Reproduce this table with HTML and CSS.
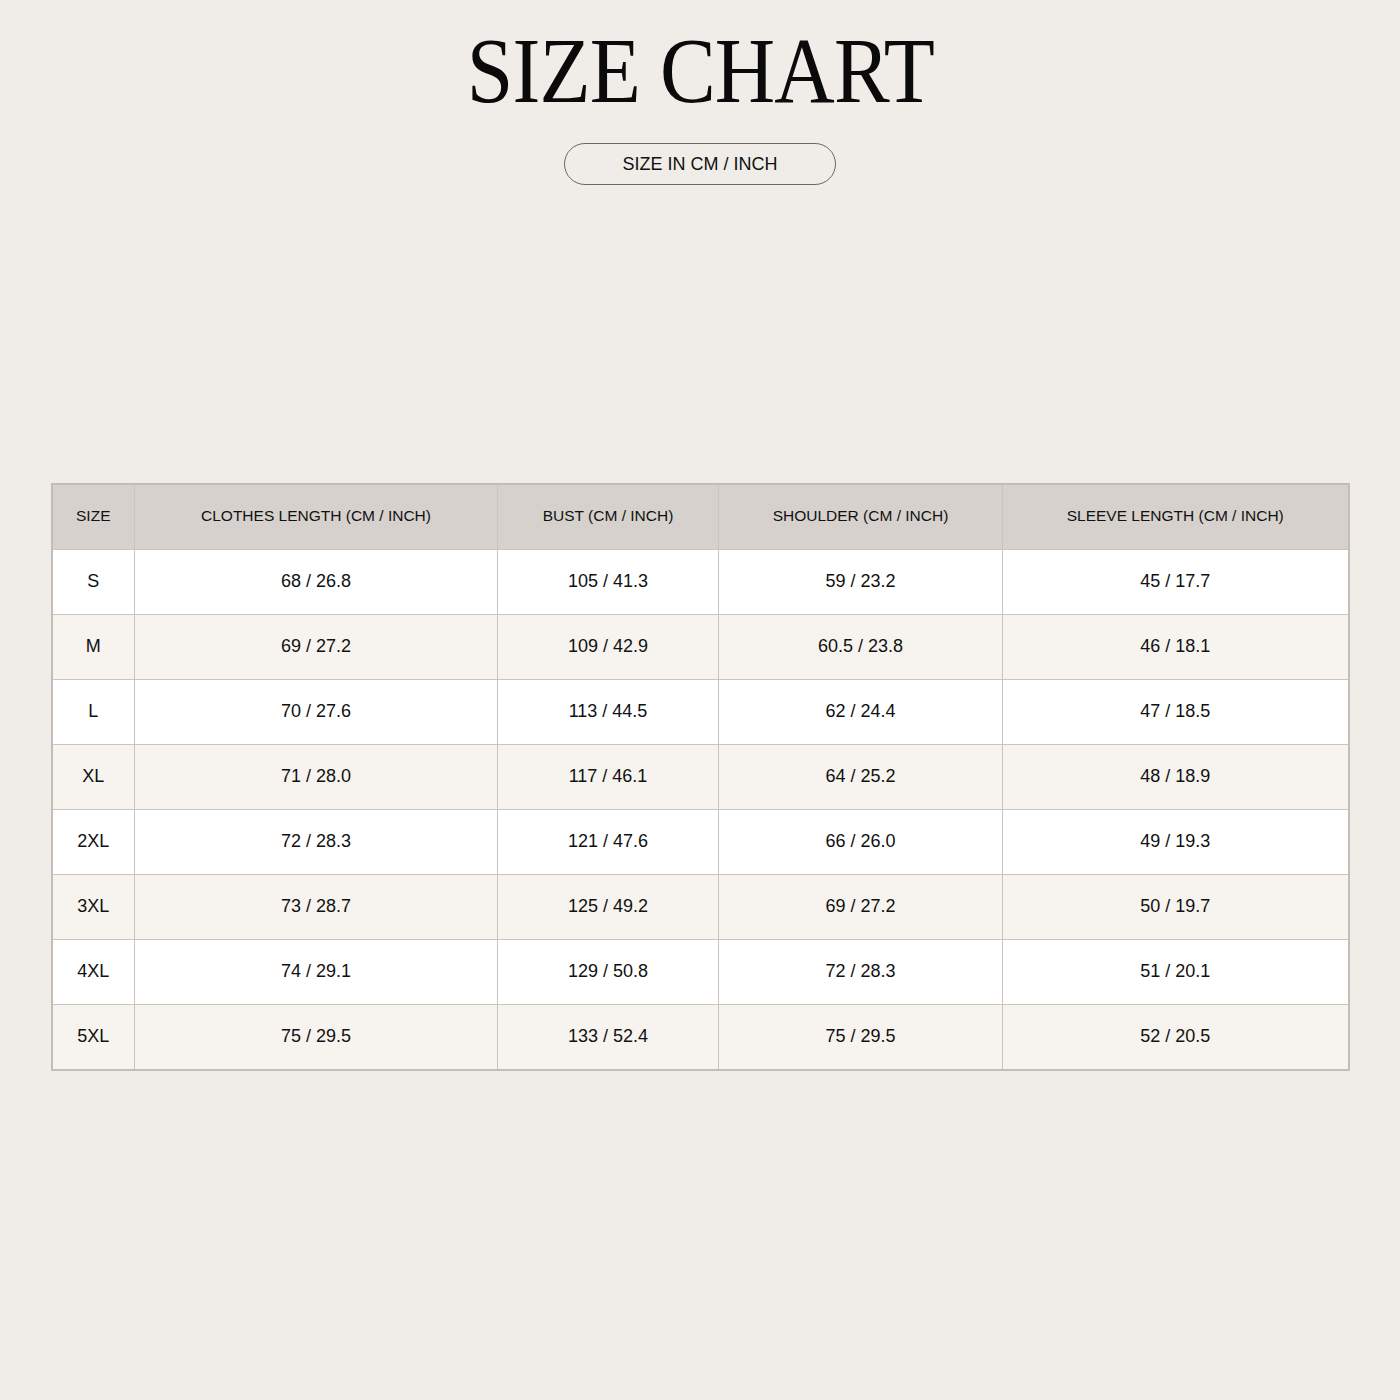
FILE: index.html
```html
<!DOCTYPE html>
<html>
<head>
<meta charset="utf-8">
<link rel="stylesheet" href="styles.css">
</head>
<body>
<div class="page">
  <h1 class="title">SIZE CHART</h1>
  <div class="pill">SIZE IN CM / INCH</div>
  <table class="chart">
    <colgroup>
      <col class="c1"><col class="c2"><col class="c3"><col class="c4"><col class="c5">
    </colgroup>
    <thead>
      <tr><th>SIZE</th><th>CLOTHES LENGTH (CM / INCH)</th><th>BUST (CM / INCH)</th><th>SHOULDER (CM / INCH)</th><th>SLEEVE LENGTH (CM / INCH)</th></tr>
    </thead>
    <tbody>
      <tr><td>S</td><td>68 / 26.8</td><td>105 / 41.3</td><td>59 / 23.2</td><td>45 / 17.7</td></tr>
      <tr><td>M</td><td>69 / 27.2</td><td>109 / 42.9</td><td>60.5 / 23.8</td><td>46 / 18.1</td></tr>
      <tr><td>L</td><td>70 / 27.6</td><td>113 / 44.5</td><td>62 / 24.4</td><td>47 / 18.5</td></tr>
      <tr><td>XL</td><td>71 / 28.0</td><td>117 / 46.1</td><td>64 / 25.2</td><td>48 / 18.9</td></tr>
      <tr><td>2XL</td><td>72 / 28.3</td><td>121 / 47.6</td><td>66 / 26.0</td><td>49 / 19.3</td></tr>
      <tr><td>3XL</td><td>73 / 28.7</td><td>125 / 49.2</td><td>69 / 27.2</td><td>50 / 19.7</td></tr>
      <tr><td>4XL</td><td>74 / 29.1</td><td>129 / 50.8</td><td>72 / 28.3</td><td>51 / 20.1</td></tr>
      <tr><td>5XL</td><td>75 / 29.5</td><td>133 / 52.4</td><td>75 / 29.5</td><td>52 / 20.5</td></tr>
    </tbody>
  </table>
</div>
</body>
</html>
```
FILE: styles.css
```css
html, body {
  margin: 0;
  padding: 0;
  background: #f0ede8;
}
.page {
  width: 1400px;
  height: 1400px;
  display: flex;
  flex-direction: column;
  align-items: center;
  font-family: "Liberation Sans", Arial, sans-serif;
  color: #111;
}
.title {
  margin: 15px 0 0 0;
  font-family: "Liberation Serif", "Times New Roman", serif;
  font-weight: normal;
  font-size: 94px;
  line-height: 110px;
  letter-spacing: -1px;
  color: #0a0a0a;
  transform: scaleX(0.89);
}
.pill {
  margin-top: 18px;
  width: 270px;
  height: 40px;
  border: 1px solid #6a6764;
  border-radius: 21px;
  display: flex;
  align-items: center;
  justify-content: center;
  font-size: 18px;
  color: #111;
}
.chart {
  margin-top: 298px;
  width: 1297px;
  border-collapse: collapse;
  border: 2px solid #c2bdb8;
  font-size: 18px;
  table-layout: fixed;
}
.c1 { width: 83px; }
.c2 { width: 363px; }
.c3 { width: 221px; }
.c4 { width: 284px; }
.c5 { width: 346px; }
.chart th, .chart td {
  border: 1px solid #c9c4bf;
  height: 62px;
  padding: 0 0 2px 0;
  text-align: center;
  vertical-align: middle;
  color: #111;
}
.chart th {
  background: #d6d1cc;
  font-weight: normal;
  font-size: 15.5px;
  height: 61px;
  padding-bottom: 3px;
}
.chart tbody tr:nth-child(odd) td { background: #ffffff; }
.chart tbody tr:nth-child(even) td { background: #f7f4ef; }
```
